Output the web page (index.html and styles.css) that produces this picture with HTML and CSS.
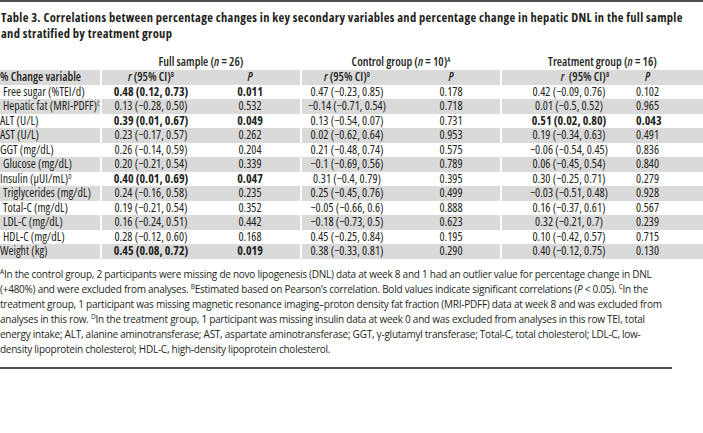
FILE: index.html
```html
<!DOCTYPE html>
<html lang="en">
<head>
<meta charset="utf-8">
<title>Table 3</title>
<link rel="stylesheet" href="styles.css">
</head>
<body>
<div class="figure">
  <h1 class="title">Table 3. Correlations between percentage changes in key secondary variables and percentage change in hepatic DNL in the full sample<br>and stratified by treatment group</h1>
  <div class="table">
    <div class="grp-row">
      <div class="c0"></div>
      <div class="grp gs">Full sample (<i>n</i> = 26)</div>
      <div class="grp gs">Control group (<i>n</i> = 10)<sup>A</sup></div>
      <div class="grp gs">Treatment group (<i>n</i> = 16)</div>
    </div>
    <div class="row head">
      <div class="c0">% Change variable</div>
      <div class="gs r1"><i>r</i> (95% CI)<sup>B</sup></div>
      <div class="p1"><i>P</i></div>
      <div class="gs r2"><i>r</i> (95% CI)<sup>B</sup></div>
      <div class="p2"><i>P</i></div>
      <div class="gs r3 h3"><i>r</i>&nbsp; (95% CI)<sup>B</sup></div>
      <div class="p3"><i>P</i></div>
    </div>
    <div class="row">
      <div class="c0 ind">Free sugar (%TEI/d)</div>
      <div class="gs r1 b">0.48 (0.12, 0.73)</div>
      <div class="p1 b">0.011</div>
      <div class="gs r2">0.47 (−0.23, 0.85)</div>
      <div class="p2">0.178</div>
      <div class="gs r3">0.42 (−0.09, 0.76)</div>
      <div class="p3">0.102</div>
    </div>
    <div class="row alt">
      <div class="c0 ind">Hepatic fat (MRI-PDFF)<sup>C</sup></div>
      <div class="gs r1">0.13 (−0.28, 0.50)</div>
      <div class="p1">0.532</div>
      <div class="gs r2">−0.14 (−0.71, 0.54)</div>
      <div class="p2">0.718</div>
      <div class="gs r3">0.01 (−0.5, 0.52)</div>
      <div class="p3">0.965</div>
    </div>
    <div class="row">
      <div class="c0">ALT (U/L)</div>
      <div class="gs r1 b">0.39 (0.01, 0.67)</div>
      <div class="p1 b">0.049</div>
      <div class="gs r2">0.13 (−0.54, 0.07)</div>
      <div class="p2">0.731</div>
      <div class="gs r3 b">0.51 (0.02, 0.80)</div>
      <div class="p3 b">0.043</div>
    </div>
    <div class="row alt">
      <div class="c0">AST (U/L)</div>
      <div class="gs r1">0.23 (−0.17, 0.57)</div>
      <div class="p1">0.262</div>
      <div class="gs r2">0.02 (−0.62, 0.64)</div>
      <div class="p2">0.953</div>
      <div class="gs r3">0.19 (−0.34, 0.63)</div>
      <div class="p3">0.491</div>
    </div>
    <div class="row">
      <div class="c0">GGT (mg/dL)</div>
      <div class="gs r1">0.26 (−0.14, 0.59)</div>
      <div class="p1">0.204</div>
      <div class="gs r2">0.21 (−0.48, 0.74)</div>
      <div class="p2">0.575</div>
      <div class="gs r3">−0.06 (−0.54, 0.45)</div>
      <div class="p3">0.836</div>
    </div>
    <div class="row alt">
      <div class="c0 ind">Glucose (mg/dL)</div>
      <div class="gs r1">0.20 (−0.21, 0.54)</div>
      <div class="p1">0.339</div>
      <div class="gs r2">−0.1 (−0.69, 0.56)</div>
      <div class="p2">0.789</div>
      <div class="gs r3">0.06 (−0.45, 0.54)</div>
      <div class="p3">0.840</div>
    </div>
    <div class="row">
      <div class="c0">Insulin (μUI/mL)<sup>D</sup></div>
      <div class="gs r1 b">0.40 (0.01, 0.69)</div>
      <div class="p1 b">0.047</div>
      <div class="gs r2">0.31 (−0.4, 0.79)</div>
      <div class="p2">0.395</div>
      <div class="gs r3">0.30 (−0.25, 0.71)</div>
      <div class="p3">0.279</div>
    </div>
    <div class="row alt">
      <div class="c0 ind">Triglycerides (mg/dL)</div>
      <div class="gs r1">0.24 (−0.16, 0.58)</div>
      <div class="p1">0.235</div>
      <div class="gs r2">0.25 (−0.45, 0.76)</div>
      <div class="p2">0.499</div>
      <div class="gs r3">−0.03 (−0.51, 0.48)</div>
      <div class="p3">0.928</div>
    </div>
    <div class="row">
      <div class="c0 ind">Total-C (mg/dL)</div>
      <div class="gs r1">0.19 (−0.21, 0.54)</div>
      <div class="p1">0.352</div>
      <div class="gs r2">−0.05 (−0.66, 0.6)</div>
      <div class="p2">0.888</div>
      <div class="gs r3">0.16 (−0.37, 0.61)</div>
      <div class="p3">0.567</div>
    </div>
    <div class="row alt">
      <div class="c0 ind">LDL-C (mg/dL)</div>
      <div class="gs r1">0.16 (−0.24, 0.51)</div>
      <div class="p1">0.442</div>
      <div class="gs r2">−0.18 (−0.73, 0.5)</div>
      <div class="p2">0.623</div>
      <div class="gs r3">0.32 (−0.21, 0.7)</div>
      <div class="p3">0.239</div>
    </div>
    <div class="row">
      <div class="c0 ind">HDL-C (mg/dL)</div>
      <div class="gs r1">0.28 (−0.12, 0.60)</div>
      <div class="p1">0.168</div>
      <div class="gs r2">0.45 (−0.25, 0.84)</div>
      <div class="p2">0.195</div>
      <div class="gs r3">0.10 (−0.42, 0.57)</div>
      <div class="p3">0.715</div>
    </div>
    <div class="row alt">
      <div class="c0">Weight (kg)</div>
      <div class="gs r1 b">0.45 (0.08, 0.72)</div>
      <div class="p1 b">0.019</div>
      <div class="gs r2">0.38 (−0.33, 0.81)</div>
      <div class="p2">0.290</div>
      <div class="gs r3">0.40 (−0.12, 0.75)</div>
      <div class="p3">0.130</div>
    </div>
  </div>
  <p class="notes"><sup>A</sup>In the control group, 2 participants were missing de novo lipogenesis (DNL) data at week 8 and 1 had an outlier value for percentage change in DNL (+480%) and were excluded from analyses. <sup>B</sup>Estimated based on Pearson’s correlation. Bold values indicate significant correlations (<i>P</i> &lt; 0.05). <sup>C</sup>In the treatment group, 1 participant was missing magnetic resonance imaging–proton density fat fraction (MRI-PDFF) data at week 8 and was excluded from analyses in this row. <sup>D</sup>In the treatment group, 1 participant was missing insulin data at week 0 and was excluded from analyses in this row TEI, total energy intake; ALT, alanine aminotransferase; AST, aspartate aminotransferase; GGT, γ-glutamyl transferase; Total-C, total cholesterol; LDL-C, low-density lipoprotein cholesterol; HDL-C, high-density lipoprotein cholesterol.</p>
</div>
</body>
</html>
```

FILE: styles.css
```css
html, body {
  margin: 0;
  padding: 0;
  background: #ffffff;
}

body {
  font-family: "Open Sans", "Liberation Sans", sans-serif;
  font-stretch: 75%;
  color: #231f20;
}

.figure {
  width: 703px;
  border-top: 2px solid #505050;
}

.title {
  margin: 8px 0 0 1px;
  font-size: 12.5px;
  letter-spacing: 0.3px;
  line-height: 16px;
  font-weight: bold;
}

.table {
  margin-top: 12px;
  font-size: 12px;
}

.grp-row,
.row {
  display: grid;
  grid-template-columns: 100px 100px 100px 92px 108px 136px 67px;
}

.grp-row {
  grid-template-columns: 100px 200px 200px 203px;
  height: 16px;
  line-height: 16px;
  font-weight: 600;
}

.grp {
  text-align: center;
}

.row {
  height: 14.5px;
  line-height: 14.5px;
}

.row > div {
  text-align: center;
  white-space: nowrap;
}

.row .c0 {
  text-align: left;
}

.head > div,
.alt > div {
  background: #dadada;
}

.gs {
  margin-left: 2px;
}

.ind {
  padding-left: 3px;
}

.head {
  font-weight: 600;
}

.b {
  font-weight: bold;
}

.p2 {
  padding-left: 10px;
}

.p3 {
  padding-right: 44px;
}

.h3 {
  padding-left: 32px;
}

sup {
  font-size: 6.5px;
  line-height: 0;
  vertical-align: 4px;
}

.notes {
  margin: 8px 0 0 0;
  width: 672px;
  font-size: 10px;
  letter-spacing: -0.25px;
  font-stretch: 100%;
  line-height: 15px;
  padding-bottom: 10px;
  border-bottom: 2px solid #505050;
}
```
